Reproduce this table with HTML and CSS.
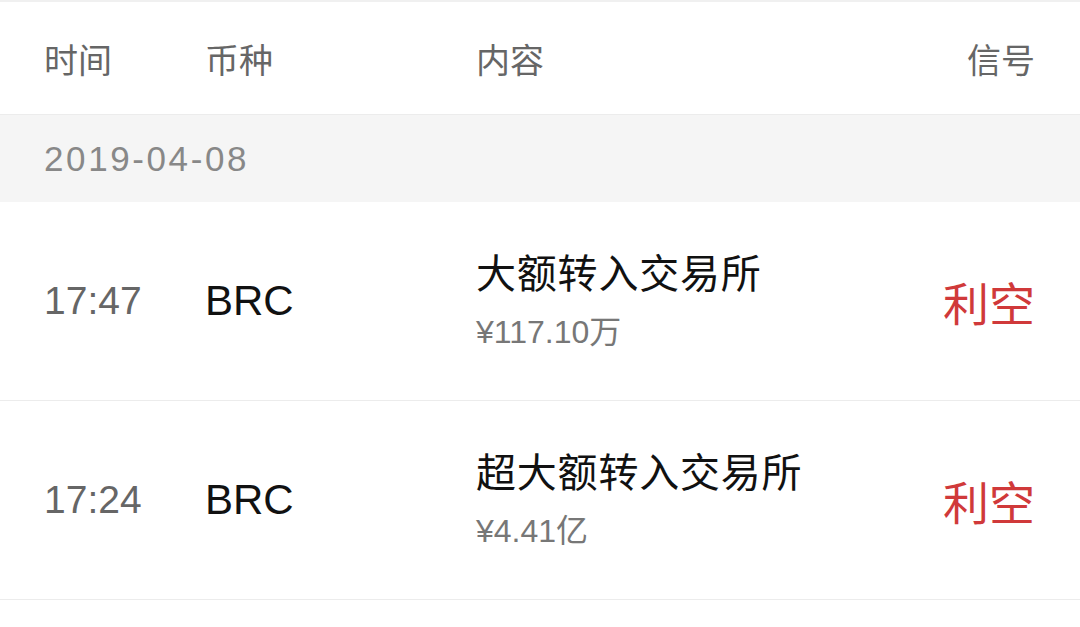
FILE: index.html
```html
<!DOCTYPE html>
<html lang="zh-CN">
<head>
  <meta charset="UTF-8" />
  <title>大额转账信号</title>
  <meta name="viewport" content="width=device-width, initial-scale=1" />
  <link rel="stylesheet" href="styles.css">
</head>
<body>
  <div class="list">
    <div class="head row-grid">
      <span>时间</span>
      <span>币种</span>
      <span>内容</span>
      <span class="sig">信号</span>
    </div>

    <div class="date">2019-04-08</div>

    <div class="item row-grid">
      <span class="time">17:47</span>
      <span class="coin">BRC</span>
      <div class="content">
        <div class="title">大额转入交易所</div>
        <div class="amount">¥117.10万</div>
      </div>
      <span class="sig bear">利空</span>
    </div>

    <div class="item row-grid">
      <span class="time">17:24</span>
      <span class="coin">BRC</span>
      <div class="content">
        <div class="title">超大额转入交易所</div>
        <div class="amount">¥4.41亿</div>
      </div>
      <span class="sig bear">利空</span>
    </div>
  </div>
</body>
</html>
```

FILE: styles.css
```css
body {
  margin: 0;
  background: #fff;
  color: #111;
  font-family: "Liberation Sans", "Noto Sans CJK SC", sans-serif;
}
.list { border-top: 2px solid #f0f0f0; }
.row-grid {
  display: grid;
  grid-template-columns: 161px 271px 1fr auto;
  align-items: center;
  padding: 0 45px 0 44px;
}
.head {
  height: 112px;
  color: #666;
  font-size: 34px;
  border-bottom: 1px solid #ececec;
}
.sig { text-align: right; }
.date {
  height: 87px;
  line-height: 87px;
  background: #f5f5f5;
  color: #888;
  font-size: 35px;
  letter-spacing: 2.6px;
  padding-left: 44px;
}
.item {
  height: 198px;
  border-bottom: 1px solid #ececec;
}
.time { color: #666; font-size: 39px; }
.coin { color: #111; font-size: 42px; }
.title { font-size: 40px; line-height: 52px; letter-spacing: 0.8px; }
.amount { color: #777; font-size: 32px; line-height: 44px; margin-top: 10px; }
.bear { color: #d0393a; font-size: 46px; }
```
